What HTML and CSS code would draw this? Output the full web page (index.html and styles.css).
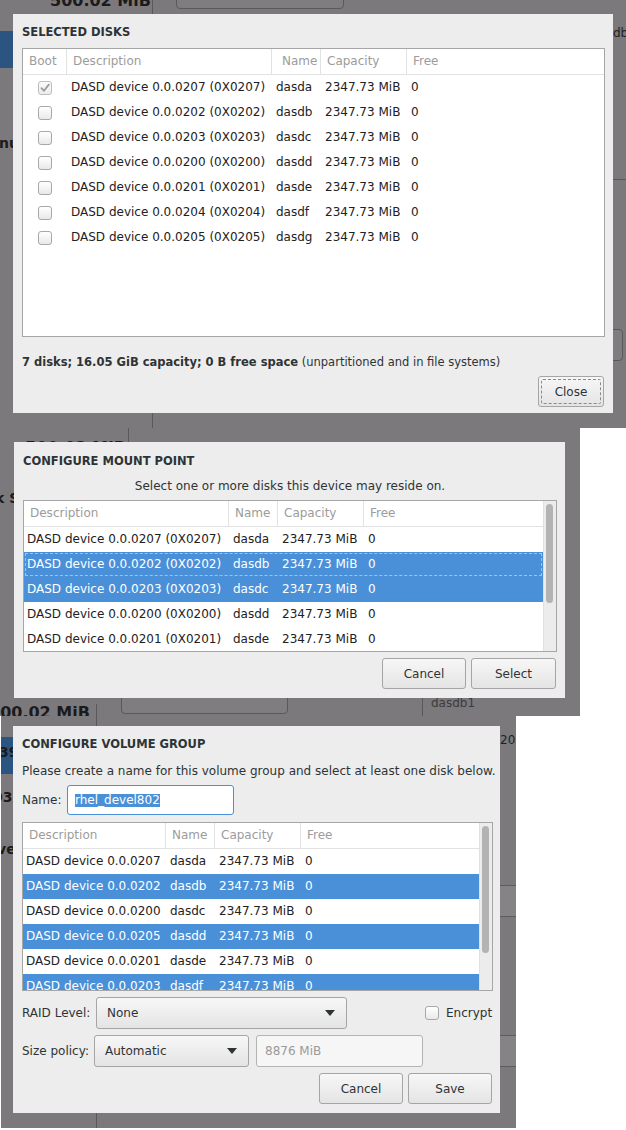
FILE: index.html
```html
<!DOCTYPE html>
<html>
<head>
<meta charset="utf-8">
<link rel="stylesheet" href="styles.css">
</head>
<body>

<section class="shot shot1">
  <span class="bg-num s1-num">500.02 MiB</span>
  <span class="vline s1-vline"></span>
  <span class="bg-box s1-box"></span>
  <span class="bg-blue s1-blue"></span>
  <span class="bg-bold s1-nu">nu</span>
  <span class="bg-reg s1-db">db)</span>
  <span class="hline s1-hline"></span>
  <span class="bg-box s1-rbox"></span>

  <div class="dialog d1">
    <h2 class="dtitle">SELECTED DISKS</h2>
    <div class="frame f1">
      <div class="list">
        <div class="row head">
          <span class="c">Boot</span><span class="c">Description</span><span class="c c-name1">Name</span><span class="c">Capacity</span><span class="c">Free</span>
        </div>
        <div class="row body"><span class="c c-cb"><span class="cb checked"><svg viewBox="0 0 14 14" width="14" height="14"><path d="M3.5 7.2 L6 9.8 L10.8 3.6" fill="none" stroke="#9b9b9b" stroke-width="1.8" stroke-linecap="round" stroke-linejoin="round"/></svg></span></span><span class="c">DASD device 0.0.0207 (0X0207)</span><span class="c">dasda</span><span class="c">2347.73 MiB</span><span class="c">0</span></div>
        <div class="row body"><span class="c c-cb"><span class="cb"></span></span><span class="c">DASD device 0.0.0202 (0X0202)</span><span class="c">dasdb</span><span class="c">2347.73 MiB</span><span class="c">0</span></div>
        <div class="row body"><span class="c c-cb"><span class="cb"></span></span><span class="c">DASD device 0.0.0203 (0X0203)</span><span class="c">dasdc</span><span class="c">2347.73 MiB</span><span class="c">0</span></div>
        <div class="row body"><span class="c c-cb"><span class="cb"></span></span><span class="c">DASD device 0.0.0200 (0X0200)</span><span class="c">dasdd</span><span class="c">2347.73 MiB</span><span class="c">0</span></div>
        <div class="row body"><span class="c c-cb"><span class="cb"></span></span><span class="c">DASD device 0.0.0201 (0X0201)</span><span class="c">dasde</span><span class="c">2347.73 MiB</span><span class="c">0</span></div>
        <div class="row body"><span class="c c-cb"><span class="cb"></span></span><span class="c">DASD device 0.0.0204 (0X0204)</span><span class="c">dasdf</span><span class="c">2347.73 MiB</span><span class="c">0</span></div>
        <div class="row body"><span class="c c-cb"><span class="cb"></span></span><span class="c">DASD device 0.0.0205 (0X0205)</span><span class="c">dasdg</span><span class="c">2347.73 MiB</span><span class="c">0</span></div>
      </div>
    </div>
    <p class="summary"><b>7 disks; 16.05 GiB capacity; 0 B free space</b> (unpartitioned and in file systems)</p>
    <div class="btnrow">
      <span class="btn btn-close focus">Close</span>
    </div>
  </div>
</section>

<section class="shot shot2">
  <span class="bg-num s2-num">500.02 MiB</span>
  <span class="vline s2-vline"></span>
  <span class="bg-bold s2-ks">k S</span>
  <span class="bg-num s2-num2">500.02 MiB</span>
  <span class="bg-box s2-box"></span>
  <span class="vline s2-vline2"></span>
  <span class="s2-pane"></span>
  <span class="bg-reg s2-dasdb1">dasdb1</span>

  <div class="dialog d2">
    <h2 class="dtitle">CONFIGURE MOUNT POINT</h2>
    <p class="subtitle">Select one or more disks this device may reside on.</p>
    <div class="frame f2">
      <div class="list">
        <div class="row head">
          <span class="c">Description</span><span class="c">Name</span><span class="c">Capacity</span><span class="c">Free</span>
        </div>
        <div class="row body"><span class="c">DASD device 0.0.0207 (0X0207)</span><span class="c">dasda</span><span class="c">2347.73 MiB</span><span class="c">0</span></div>
        <div class="row body sel cursor"><span class="c">DASD device 0.0.0202 (0X0202)</span><span class="c">dasdb</span><span class="c">2347.73 MiB</span><span class="c">0</span></div>
        <div class="row body sel"><span class="c">DASD device 0.0.0203 (0X0203)</span><span class="c">dasdc</span><span class="c">2347.73 MiB</span><span class="c">0</span></div>
        <div class="row body"><span class="c">DASD device 0.0.0200 (0X0200)</span><span class="c">dasdd</span><span class="c">2347.73 MiB</span><span class="c">0</span></div>
        <div class="row body"><span class="c">DASD device 0.0.0201 (0X0201)</span><span class="c">dasde</span><span class="c">2347.73 MiB</span><span class="c">0</span></div>
      </div>
      <div class="scroll"><span class="thumb thumb2"></span></div>
    </div>
    <div class="btnrow btnrow2">
      <span class="btn btn-84">Cancel</span>
      <span class="btn btn-85">Select</span>
    </div>
  </div>
</section>

<section class="shot shot3">
  <span class="vline s3-vline"></span>
  <span class="bg-blue s3-blue"></span>
  <span class="bg-bold s3-39">39</span>
  <span class="bg-bold s3-03">03</span>
  <span class="bg-bold s3-ve">ve</span>
  <span class="bg-reg s3-20">20</span>
  <span class="band s3-band1"></span>
  <span class="band s3-band2"></span>

  <div class="dialog d3">
    <h2 class="dtitle">CONFIGURE VOLUME GROUP</h2>
    <p class="intro">Please create a name for this volume group and select at least one disk below.</p>
    <div class="namerow">
      <span class="lbl lbl-name">Name:</span>
      <span class="entry entry-name"><span class="seltext">rhel_devel802</span></span>
    </div>
    <div class="frame f3">
      <div class="list">
        <div class="row head">
          <span class="c">Description</span><span class="c">Name</span><span class="c">Capacity</span><span class="c">Free</span>
        </div>
        <div class="row body"><span class="c">DASD device 0.0.0207</span><span class="c">dasda</span><span class="c">2347.73 MiB</span><span class="c">0</span></div>
        <div class="row body sel"><span class="c">DASD device 0.0.0202</span><span class="c">dasdb</span><span class="c">2347.73 MiB</span><span class="c">0</span></div>
        <div class="row body"><span class="c">DASD device 0.0.0200</span><span class="c">dasdc</span><span class="c">2347.73 MiB</span><span class="c">0</span></div>
        <div class="row body sel"><span class="c">DASD device 0.0.0205</span><span class="c">dasdd</span><span class="c">2347.73 MiB</span><span class="c">0</span></div>
        <div class="row body"><span class="c">DASD device 0.0.0201</span><span class="c">dasde</span><span class="c">2347.73 MiB</span><span class="c">0</span></div>
        <div class="row body sel"><span class="c">DASD device 0.0.0203</span><span class="c">dasdf</span><span class="c">2347.73 MiB</span><span class="c">0</span></div>
      </div>
      <div class="scroll"><span class="thumb thumb3"></span></div>
    </div>
    <div class="formrow raidrow">
      <span class="lbl lbl-raid">RAID Level:</span>
      <span class="combo combo-raid"><span>None</span><span class="arrow"></span></span>
      <span class="check">
        <span class="cb"></span>
        <span>Encrypt</span>
      </span>
    </div>
    <div class="formrow sizerow">
      <span class="lbl lbl-size">Size policy:</span>
      <span class="combo combo-size"><span>Automatic</span><span class="arrow"></span></span>
      <span class="entry entry-size">8876 MiB</span>
    </div>
    <div class="btnrow btnrow3">
      <span class="btn btn-84">Cancel</span>
      <span class="btn btn-84">Save</span>
    </div>
  </div>
</section>

</body>
</html>
```

FILE: styles.css
```css
* { box-sizing: border-box; }

body {
  margin: 0;
  background: #ffffff;
  font-family: "DejaVu Sans", "Liberation Sans", sans-serif;
  font-size: 12px;
  color: #1e2122;
}

/* ---------- screenshot backdrops ---------- */
.shot {
  position: relative;
  overflow: hidden;
  background: #7b797c;
}
.shot1 { width: 626px; height: 428px; padding: 14px 0 0 13px; }
.shot2 { width: 580px; height: 288px; padding: 14px 0 0 14px; }
.shot3 { width: 515px; height: 412px; margin-left: 1px; padding: 10px 0 0 12px; }

.bg-num, .bg-bold, .bg-reg, .vline, .hline, .bg-box, .bg-blue, .band, .s2-pane {
  position: absolute;
  white-space: nowrap;
}
.bg-num { font-size: 16px; font-weight: bold; line-height: 16px; color: #1b1b1c; }
.bg-bold { font-size: 14px; font-weight: bold; line-height: 16px; color: #1b1b1c; }
.bg-reg { font-size: 12px; line-height: 16px; color: #1f1f20; }
.vline { width: 1px; background: #5a585b; }
.hline { height: 1px; background: #5a585b; }
.bg-box { border: 1px solid #5a585b; border-radius: 4px; background: #7f7d80; }
.bg-blue { background: #2b5580; }
.band { border-top: 1px solid #5e5c5f; border-bottom: 1px solid #5e5c5f; background: #858386; }

.s1-num { left: 50px; top: -7px; }
.s1-vline { left: 152px; top: 0; height: 428px; }
.s1-box { left: 176px; top: -22px; width: 168px; height: 31px; }
.s1-blue { left: 0; top: 31px; width: 13px; height: 37px; }
.s1-nu { left: -1px; top: 135px; }
.s1-db { left: 613px; top: 25px; }
.s1-hline { left: 600px; top: 179px; width: 26px; }
.s1-rbox { left: 560px; top: 329px; width: 63px; height: 32px; }

.s2-num { left: 25px; top: 12px; }
.s2-vline { left: 128px; top: 0; height: 270px; }
.s2-ks { left: -5px; top: 62px; }
.s2-num2 { left: -11px; top: 277px; }
.s2-box { left: 121px; top: 250px; width: 167px; height: 36px; }
.s2-vline2 { left: 96px; top: 276px; height: 12px; }
.s2-pane { left: 422px; top: 257px; width: 158px; height: 31px; border-left: 1px solid #5a585b; }
.s2-dasdb1 { left: 431px; top: 267px; color: #3c3b3d; }

.s3-vline { left: 95px; top: 0; height: 412px; }
.s3-blue { left: 0; top: 21px; width: 12px; height: 37px; }
.s3-39 { left: -2px; top: 28px; }
.s3-03 { left: -8px; top: 73px; }
.s3-ve { left: -4px; top: 125px; }
.s3-20 { left: 499px; top: 16px; }
.s3-band1 { left: 480px; top: 169px; width: 40px; height: 32px; }
.s3-band2 { left: 480px; top: 319px; width: 40px; height: 32px; }

/* ---------- dialogs ---------- */
.dialog {
  position: relative;
  z-index: 1;
  background: #ededed;
  display: flex;
  flex-direction: column;
}
.d1 { width: 600px; height: 399px; padding: 10px 8px 0 9px; }
.d2 { width: 551px; height: 256px; padding: 11px 8px 0 9px; }
.d3 { width: 487px; height: 387px; padding: 10px 7px 0 9px; }

.dtitle {
  margin: 0;
  font-size: 11.5px;
  font-weight: bold;
  line-height: 16px;
  color: #2e3436;
}

.subtitle {
  margin: 9px 0 0;
  line-height: 16px;
  text-align: center;
  color: #2e3436;
}
.intro {
  margin: 11px 0 0;
  line-height: 16px;
  color: #2e3436;
  white-space: nowrap;
}

/* ---------- lists ---------- */
.frame {
  border: 1px solid #a6a6a6;
  background: #ffffff;
  display: flex;
  overflow: hidden;
}
.f1 { margin-top: 8px; height: 289px; }
.f2 { margin-top: 6px; height: 152px; }
.f3 { margin-top: 7px; height: 169px; }

.list { flex: 1; min-width: 0; }

.row {
  display: grid;
  height: 25px;
  line-height: 25px;
  white-space: nowrap;
}
.row .c { overflow: hidden; }
.head {
  height: 26px;
  color: #9c9c9c;
  border-bottom: 1px solid #e2e2e2;
}
.head .c { padding-left: 6px; border-right: 1px solid #e2e2e2; }
.head .c:last-child { border-right: 0; }
.head .c-name1 { padding-left: 10px; }

.f1 .row { grid-template-columns: 44px 205px 49px 86px 1fr; }
.f2 .row { grid-template-columns: 205px 49px 86px 1fr; }
.f3 .row { grid-template-columns: 143px 49px 86px 1fr; }

.body .c { padding-left: 4px; }
.f2 .body .c:first-child,
.f3 .body .c:first-child { padding-left: 3px; }

.c-cb { display: flex; align-items: center; justify-content: center; padding-left: 0 !important; }

.sel { background: #4a90d9; color: #ffffff; }
.cursor { outline: 1px dashed #9fc3ea; outline-offset: -2px; }

.scroll {
  width: 13px;
  background: #ececec;
  border-left: 1px solid #e0e0e0;
  flex: none;
}
.thumb {
  display: block;
  width: 7px;
  margin: 3px 0 0 2px;
  background: #b3b3b3;
  border-radius: 4px;
}
.thumb2 { height: 99px; }
.thumb3 { height: 127px; }

/* ---------- checkbox ---------- */
.cb {
  display: inline-block;
  width: 14px;
  height: 14px;
  border: 1px solid #a8a8a8;
  border-radius: 3px;
  background: linear-gradient(#ffffff, #e9e9e9);
  flex: none;
}
.cb svg { display: block; margin: -1px 0 0 -1px; }
.cb.checked { border-color: #bdbdbd; background: linear-gradient(#fafafa, #ececec); }

/* ---------- footer / buttons ---------- */
.summary {
  margin: 17px 0 0;
  font-size: 11.5px;
  line-height: 16px;
  color: #2e3436;
  white-space: nowrap;
}
.summary b { font-weight: bold; }

.btnrow {
  display: flex;
  justify-content: flex-end;
  gap: 5px;
  margin-top: 6px;
  margin-right: 1px;
}
.btn {
  position: relative;
  display: flex;
  align-items: center;
  justify-content: center;
  height: 31px;
  border: 1px solid #a5a5a5;
  border-radius: 3px;
  background: linear-gradient(#f7f7f7, #e4e4e4);
  color: #2e3436;
  font-size: 12px;
}
.btn-close { width: 66px; }
.btn-84 { width: 84px; }
.btn-85 { width: 85px; }
.focus::after {
  content: "";
  position: absolute;
  inset: 2px;
  border: 1px dashed #8a8a8a;
  border-radius: 2px;
}

/* ---------- volume group form ---------- */
.namerow {
  display: flex;
  align-items: center;
  margin-top: 6px;
  height: 30px;
}
.lbl { color: #2e3436; white-space: nowrap; flex: none; }
.lbl-name { width: 45px; }
.lbl-raid { width: 74px; }
.lbl-size { width: 72px; }

.entry {
  display: flex;
  align-items: center;
  height: 30px;
  border: 1px solid #b4b4b4;
  border-radius: 3px;
  background: #ffffff;
  padding-left: 7px;
  flex: none;
}
.entry-name { width: 167px; border-color: #4a90d9; }
.seltext { background: #4a90d9; color: #ffffff; line-height: 13px; }
.entry-size { width: 167px; height: 32px; margin-left: 7px; background: #f6f6f6; color: #9a9a9a; padding-left: 8px; }

.formrow {
  display: flex;
  align-items: center;
  height: 32px;
  margin-top: 6px;
}
.combo {
  display: flex;
  align-items: center;
  height: 32px;
  padding: 0 11px 0 10px;
  border: 1px solid #a5a5a5;
  border-radius: 3px;
  background: linear-gradient(#f7f7f7, #e4e4e4);
  color: #2e3436;
  flex: none;
}
.combo-raid { width: 251px; }
.combo-size { width: 155px; }
.arrow {
  margin-left: auto;
  width: 0;
  height: 0;
  border-left: 5px solid transparent;
  border-right: 5px solid transparent;
  border-top: 6px solid #2e3436;
}
.check {
  display: flex;
  align-items: center;
  gap: 7px;
  margin-left: 78px;
  color: #2e3436;
}
.btnrow3 { margin-top: 6px; }
```
